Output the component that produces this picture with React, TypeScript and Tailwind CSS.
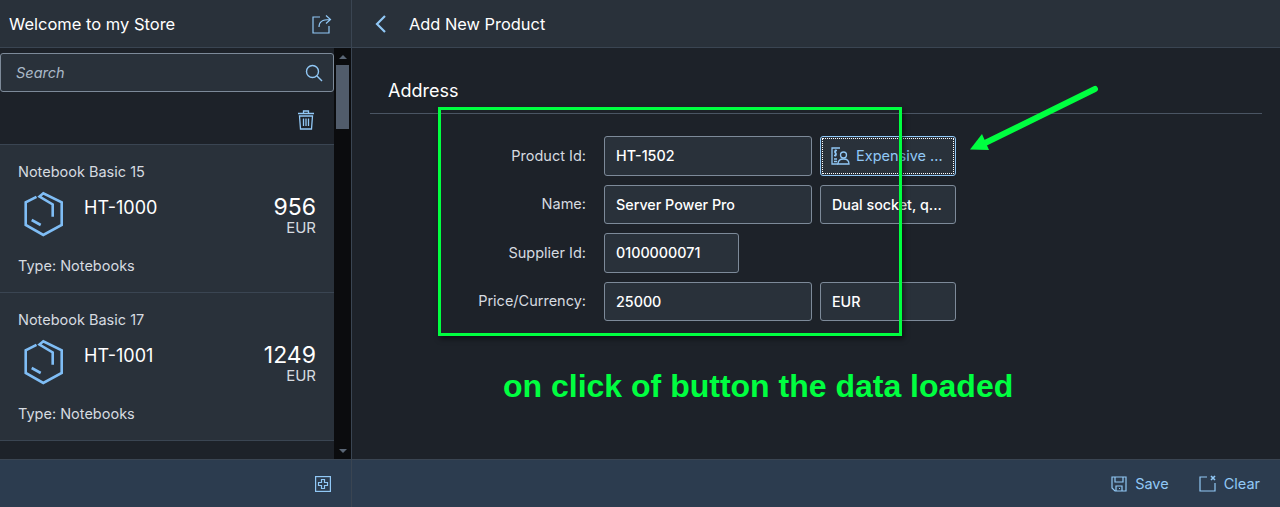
import type { ReactNode } from "react";

const products = [
  { title: "Notebook Basic 15", id: "HT-1000", price: "956" },
  { title: "Notebook Basic 17", id: "HT-1001", price: "1249" },
];

function BoxIcon() {
  return (
    <svg width="40" height="46" viewBox="0 0 40 46" fill="none" stroke="#7fbdf5" strokeWidth="2.6">
      <path d="M12.5 5.8L1.7 11.3V34L19.3 44L37.7 34V11.3L19.3 2.3L15.5 5.5L28.7 13.5V25.7" />
      <path d="M7.7 29L16.7 34" />
    </svg>
  );
}

function Input({ children, className }: { children: ReactNode; className: string }) {
  return (
    <div className={`flex h-[39.5px] items-center rounded-[3px] border border-[#7d8a99] bg-[#29313a] px-[11px] text-[14.3px] font-medium text-white ${className}`}>
      {children}
    </div>
  );
}

function Label({ children }: { children: ReactNode }) {
  return <div className="w-[234px] pr-[18px] text-right text-[14.5px] text-[#d6dbe0]">{children}</div>;
}

export default function App() {
  return (
    <div className="relative flex h-[507px] w-[1280px] flex-col overflow-hidden bg-[#1d2229] font-['Inter',sans-serif]">
      <div className="flex min-h-0 flex-1">
        {/* master */}
        <div className="flex w-[352px] flex-col border-r border-[#3a4552]">
          <div className="flex h-[48px] items-center justify-between border-b border-[#3a4552] bg-[#29313a] pl-[9px] pr-[19px]">
            <span className="pt-[2px] text-[16.5px] text-white">Welcome to my Store</span>
            <svg width="20" height="20" viewBox="0 0 20 20" fill="none" stroke="#91c8f6" strokeWidth="1.2">
              <path d="M8 3H1V19H17V12" />
              <path d="M7 13C7 8 10 5.5 18 5.5M14 1.5L18.5 5.5L14 9.5" />
            </svg>
          </div>
          <div className="flex min-h-0 flex-1">
            <div className="min-w-0 flex-1 overflow-hidden">
              <div className="px-0 pb-[12px] pt-[5px]">
                <div className="flex h-[39px] items-center justify-between rounded-[3px] border border-[#7d8a99] bg-[#29313a] pl-[15px] pr-[10px]">
                  <span className="text-[14.5px] italic text-[#a9b8c7]">Search</span>
                  <svg width="18" height="18" viewBox="0 0 18 18" fill="none" stroke="#91c8f6" strokeWidth="1.4">
                    <circle cx="7.5" cy="7.5" r="6" />
                    <path d="M12 12L17 17" />
                  </svg>
                </div>
              </div>
              <div className="flex h-[41px] justify-end border-b border-[#3a4552] pr-[19px] pt-[6px]">
                <svg width="18" height="20" viewBox="0 0 18 20" fill="none" stroke="#91c8f6" strokeWidth="1.3">
                  <path d="M1 3.5H17M6.5 3V1H11.5V3M2.5 6H15.5L14.5 19H3.5Z" />
                  <path d="M6.5 8.5V16M9 8.5V16M11.5 8.5V16" />
                </svg>
              </div>
              {products.map((p) => (
                <div key={p.id} className="h-[148px] border-b border-[#3a4552] bg-[#29313a] pl-[18px] pr-[18px] pt-[17px]">
                  <div className="text-[14.5px] leading-[20px] text-[#d6dbe0]">{p.title}</div>
                  <div className="mt-[7px] flex h-[64px]">
                    <div className="ml-[6px] mt-[2px]"><BoxIcon /></div>
                    <div className="ml-[20px] mt-[7px] text-[18px] leading-[24px] text-white">{p.id}</div>
                    <div className="ml-auto mt-[4.5px] text-right">
                      <div className="text-[23px] leading-[26px] text-white">{p.price}</div>
                      <div className="text-[15px] leading-[16px] text-[#d6dbe0]">EUR</div>
                    </div>
                  </div>
                  <div className="mt-[3px] text-[14.5px] leading-[20px] text-[#d6dbe0]">Type: Notebooks</div>
                </div>
              ))}
            </div>
            <div className="flex w-[17px] flex-col items-center bg-[#0b0c0e]">
              <div className="mt-[7px] h-0 w-0 border-x-[4px] border-b-[4px] border-x-transparent border-b-[#5a6675]" />
              <div className="mt-[6px] h-[64px] w-[13px] bg-[#515c6b]" />
              <div className="mb-[6px] mt-auto h-0 w-0 border-x-[4px] border-t-[4px] border-x-transparent border-t-[#5a6675]" />
            </div>
          </div>
        </div>

        {/* detail */}
        <div className="min-w-0 flex-1">
          <div className="flex h-[48px] items-center border-b border-[#3a4552] bg-[#29313a] pl-[23px]">
            <svg width="12" height="18" viewBox="0 0 12 18" fill="none" stroke="#91c8f6" strokeWidth="2.2">
              <path d="M10 1L2 9L10 17" />
            </svg>
            <span className="ml-[22px] pt-[2px] text-[16.4px] text-white">Add New Product</span>
          </div>
          <div className="px-[18px] pt-[27px]">
            <div className="h-[39px] border-b border-[#4a5563] pl-[18px] text-[18px] leading-[31px] text-white">Address</div>
            <div className="mt-[22px] flex flex-col gap-[9px]">
              <div className="flex items-center">
                <Label>Product Id:</Label>
                <Input className="w-[208px]">HT-1502</Input>
                <div className="ml-[8px] flex h-[39.5px] w-[136px] items-center rounded-[3px] border border-[#91c8f6] bg-[#29313a] pl-[10px] text-[14.5px] text-[#91c8f6] outline-1 -outline-offset-3 outline-dotted outline-white">
                  <svg width="19" height="18" viewBox="0 0 19 18" fill="none" stroke="#91c8f6" strokeWidth="1.3">
                    <path d="M9 1H1V17H7" />
                    <circle cx="12.5" cy="8" r="3" />
                    <path d="M7 17C7 13.5 9.5 12 12.5 12S18 13.5 18 17Z" />
                    <path d="M6 3.5H4.5C3.5 3.5 3.5 6 4.5 6S5.5 8.5 4.5 8.5H3M4.5 2.5V9.5M3 12H6M3 14.5H6" />
                  </svg>
                  <span className="ml-[6px]">Expensive ...</span>
                </div>
              </div>
              <div className="flex items-center">
                <Label>Name:</Label>
                <Input className="w-[208px]">Server Power Pro</Input>
                <Input className="ml-[8px] w-[136px]">Dual socket, q...</Input>
              </div>
              <div className="flex items-center">
                <Label>Supplier Id:</Label>
                <Input className="w-[135px]">0100000071</Input>
              </div>
              <div className="flex items-center">
                <Label>Price/Currency:</Label>
                <Input className="w-[208px]">25000</Input>
                <Input className="ml-[8px] w-[136px]">EUR</Input>
              </div>
            </div>
          </div>
        </div>
      </div>

      {/* footers */}
      <div className="flex h-[48px] border-t border-[#3a4552] bg-[#2c3c4f]">
        <div className="flex w-[352px] items-center justify-end border-r border-[#3a4552] pr-[20px]">
          <svg width="16" height="16" viewBox="0 0 16 16" fill="none" stroke="#91c8f6" strokeWidth="1.2">
            <rect x="0.6" y="0.6" width="14.8" height="14.8" />
            <path d="M6.5 3.5H9.5V6.5H12.5V9.5H9.5V12.5H6.5V9.5H3.5V6.5H6.5Z" />
          </svg>
        </div>
        <div className="flex flex-1 items-center justify-end pr-[20px] text-[14.5px] text-[#91c8f6]">
          <svg width="16" height="16" viewBox="0 0 16 16" fill="none" stroke="#91c8f6" strokeWidth="1.2">
            <path d="M1 1H15V15H4L1 12Z" />
            <path d="M4 1V6H12V1M5 15V10H11V15M8 12.5H9" />
          </svg>
          <span className="ml-[8px]">Save</span>
          <svg className="ml-[30px]" width="17" height="17" viewBox="0 0 17 17" fill="none" stroke="#91c8f6" strokeWidth="1.2">
            <path d="M8 2H1V16H16V8" />
            <path d="M12 1L16 5M16 1L12 5" strokeWidth="1.6" />
          </svg>
          <span className="ml-[8px]">Clear</span>
        </div>
      </div>

      {/* annotation drawn over the screenshot */}
      <div className="absolute left-[438px] top-[107px] h-[229px] w-[464px] border-[3px] border-[#00ff40] shadow-[2px_3px_5px_rgba(0,0,0,0.5)]" />
      <svg className="absolute left-[965px] top-[80px]" width="140" height="80" viewBox="0 0 140 80" fill="none">
        <path d="M130 9L18 64" stroke="#00ff40" strokeWidth="6" strokeLinecap="round" />
        <path d="M5 69.5L17 54L24 70Z" fill="#00ff40" />
      </svg>
      <div className="absolute left-[503px] top-[367px] font-['Liberation_Sans',sans-serif] text-[32px] font-bold leading-[38px] text-[#00ff40]">
        on click of button the data loaded
      </div>
    </div>
  );
}
